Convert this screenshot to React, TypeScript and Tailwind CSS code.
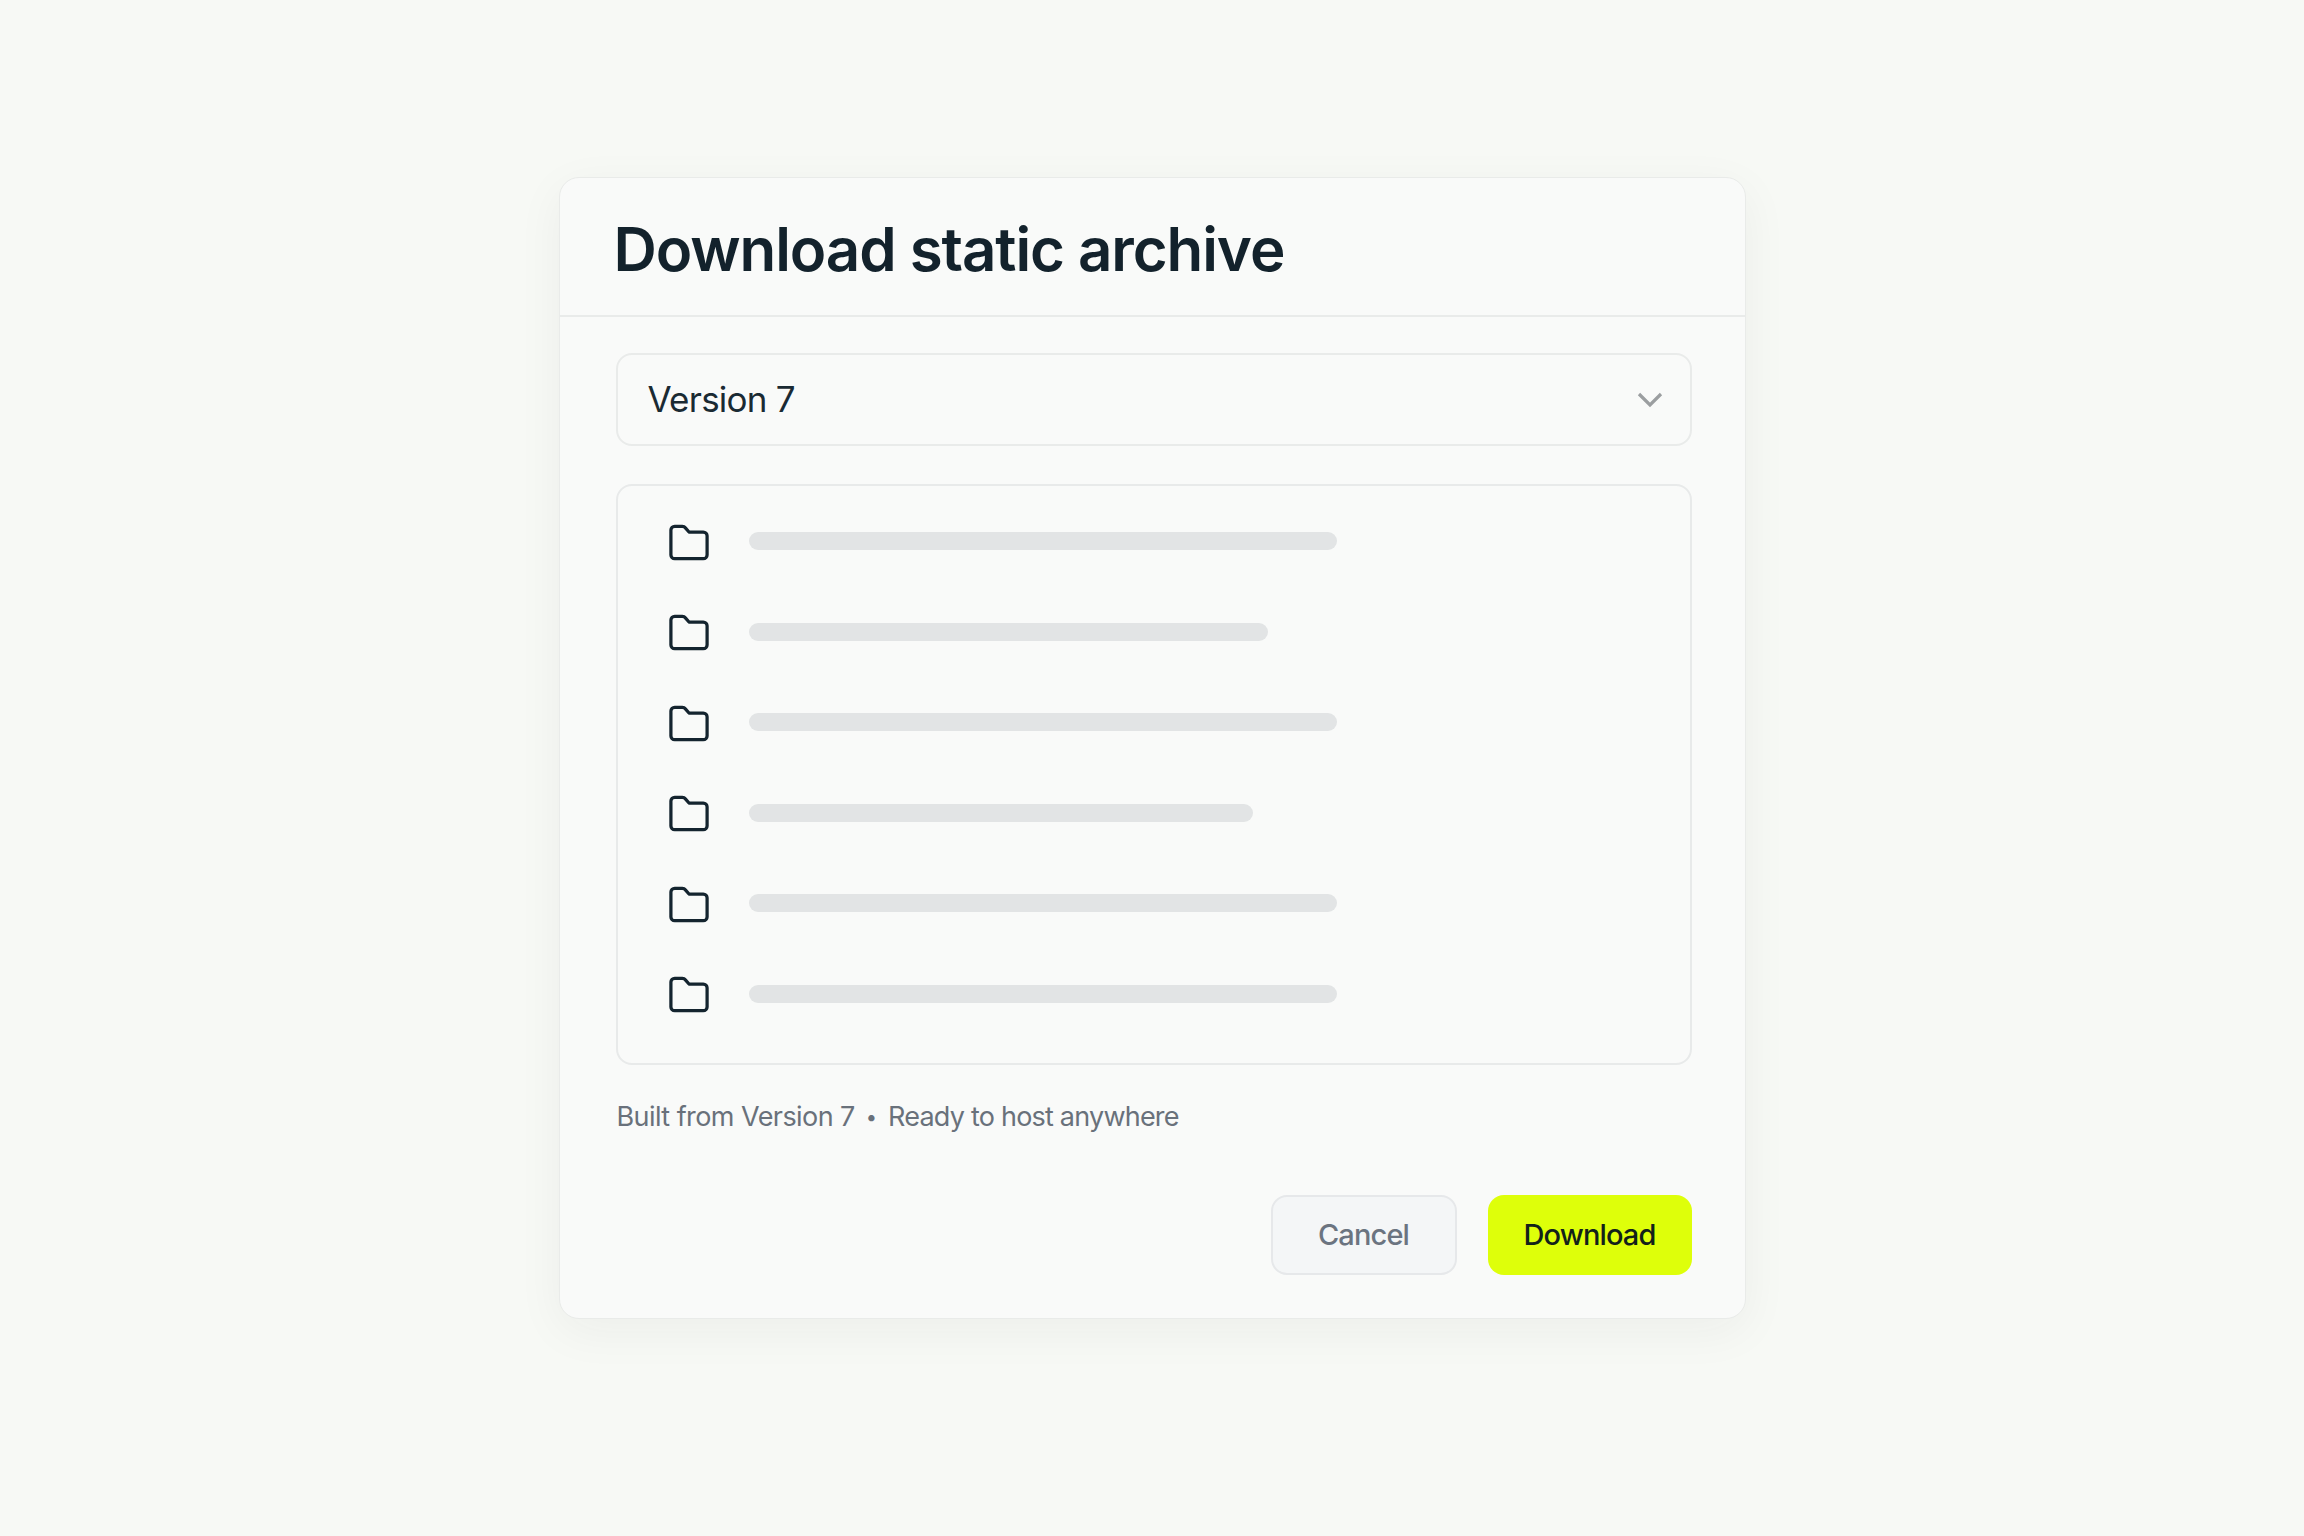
const rows = [588, 519, 588, 504, 588, 588];

function FolderIcon() {
  return (
    <svg width="40" height="37" viewBox="0 0 42 38" fill="none" className="shrink-0">
      <path
        d="M2 6a4 4 0 0 1 4-4h8a4 4 0 0 1 3.2 1.6L21 8h15a4 4 0 0 1 4 4v20a4 4 0 0 1-4 4H6a4 4 0 0 1-4-4Z"
        stroke="#14242f"
        strokeWidth="3.4"
        strokeLinejoin="round"
      />
    </svg>
  );
}

export default function App() {
  return (
    <div className="flex min-h-screen justify-center bg-[#f7f9f5] pt-[177px] font-['Inter',sans-serif]">
      <div className="h-[1142px] w-[1187px] rounded-[20px] border border-[#e9ebe9] bg-[#f9faf9] shadow-[0_12px_48px_rgba(30,40,30,0.05)]">
        <header className="flex h-[139px] items-center border-b-2 border-[#e9ebea] pt-[5px] pl-[54px]">
          <h1 className="text-[60px] leading-none font-semibold tracking-[-0.018em] text-[#13222c]">
            Download static archive
          </h1>
        </header>

        <div className="pt-[36px] pr-[53px] pl-[56px]">
          <button
            type="button"
            className="flex h-[93px] w-full items-center justify-between rounded-[16px] border-2 border-[#e9ebea] pr-[27px] pl-[30px] text-[35px] tracking-[-0.022em] text-[#1a2a33]"
          >
            Version 7
            <svg width="26" height="18" viewBox="0 0 26 18" fill="none">
              <path d="M2 3l11 11L24 3" stroke="#9b9ea0" strokeWidth="3.2" />
            </svg>
          </button>

          <div className="mt-[38px] flex h-[581px] flex-col gap-[52.5px] rounded-[16px] border-2 border-[#e8eaea] pt-[37px] pl-[51px]">
            {rows.map((width, i) => (
              <div key={i} className="flex h-[38px] items-center gap-[40px]">
                <FolderIcon />
                <div
                  className="mb-[2px] h-[18px] rounded-full bg-[#e2e4e5]"
                  style={{ width }}
                />
              </div>
            ))}
          </div>

          <p className="mt-[34px] flex items-center pl-[1px] text-[27px] leading-[36px] text-[#69717b]">
            <span className="tracking-[-0.021em]">Built from Version 7</span>
            <span className="mx-[11px] text-[20px]">•</span>
            <span className="tracking-[-0.029em]">Ready to host anywhere</span>
          </p>

          <div className="mt-[60px] flex justify-end gap-[31px]">
            <button
              type="button"
              className="h-[80px] w-[186px] rounded-[16px] border-2 border-[#e6e8ea] bg-[#f4f6f7] text-[29px] font-medium tracking-[-0.03em] text-[#6b7480]"
            >
              Cancel
            </button>
            <button
              type="button"
              className="h-[80px] w-[204px] rounded-[16px] bg-[#deff0a] text-[29px] font-medium tracking-[-0.03em] text-[#12211a]"
            >
              Download
            </button>
          </div>
        </div>
      </div>
    </div>
  );
}
